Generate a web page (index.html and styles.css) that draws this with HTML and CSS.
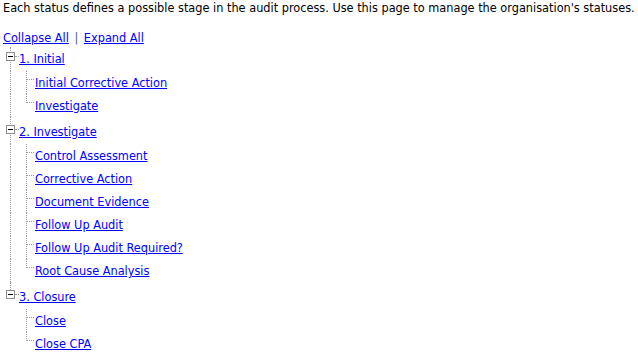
FILE: index.html
```html
<!DOCTYPE html>
<html>
<head>
<meta charset="utf-8">
<link rel="stylesheet" href="styles.css">
</head>
<body>
<p class="intro">Each status defines a possible stage in the audit process. Use this page to manage the organisation's statuses.</p>
<div class="actions"><a href="#">Collapse All</a> <span class="sep">|</span> <a href="#">Expand All</a></div>
<div class="tree">
  <div class="node first">
    <div class="row parent"><span class="tog"><span class="box"></span></span><a href="#">1. Initial</a></div>
    <div class="row child"><span class="indent"></span><span class="elbow"></span><a href="#">Initial Corrective Action</a></div>
    <div class="row child last"><span class="indent"></span><span class="elbow"></span><a href="#">Investigate</a></div>
  </div>
  <div class="node">
    <div class="row parent"><span class="tog"><span class="box"></span></span><a href="#">2. Investigate</a></div>
    <div class="row child"><span class="indent"></span><span class="elbow"></span><a href="#">Control Assessment</a></div>
    <div class="row child"><span class="indent"></span><span class="elbow"></span><a href="#">Corrective Action</a></div>
    <div class="row child"><span class="indent"></span><span class="elbow"></span><a href="#">Document Evidence</a></div>
    <div class="row child"><span class="indent"></span><span class="elbow"></span><a href="#">Follow Up Audit</a></div>
    <div class="row child"><span class="indent"></span><span class="elbow"></span><a href="#">Follow Up Audit Required?</a></div>
    <div class="row child last"><span class="indent"></span><span class="elbow"></span><a href="#">Root Cause Analysis</a></div>
  </div>
  <div class="node lastnode">
    <div class="row parent"><span class="tog"><span class="box"></span></span><a href="#">3. Closure</a></div>
    <div class="row child"><span class="indent"></span><span class="elbow"></span><a href="#">Close</a></div>
    <div class="row child last"><span class="indent"></span><span class="elbow"></span><a href="#">Close CPA</a></div>
  </div>
</div>
</body>
</html>
```
FILE: styles.css
```css
body {
  margin: 0;
  background: #fff;
  color: #000;
  font-family: "DejaVu Sans Condensed", "DejaVu Sans", sans-serif;
  font-stretch: semi-condensed;
  font-size: 12.6px;
}
a {
  color: #0000ff;
  text-decoration: underline;
}
.intro {
  margin: 0;
  padding-left: 3px;
  line-height: 15px;
  white-space: nowrap;
}
.actions {
  margin-top: 16px;
  padding-left: 3px;
  line-height: 13px;
}
.sep {
  color: #4a5a8a;
  margin: 0 2px;
}
.tree {
  padding-left: 2px;
}
.row {
  display: flex;
  line-height: 15px;
  white-space: nowrap;
}
.row a {
  margin-left: 1px;
}
.parent {
  height: 26px;
  padding-top: 1px;
  align-items: stretch;
}
.parent a {
  align-self: center;
}
.child {
  height: 23px;
  align-items: stretch;
}
.child a {
  align-self: center;
}
.tog, .indent, .elbow {
  position: relative;
  width: 16px;
  flex: none;
}
.parent .tog {
  margin-top: -1px;
  height: 27px;
}
.tog::before, .indent::before {
  content: "";
  position: absolute;
  left: 8px;
  top: 0;
  bottom: 0;
  border-left: 1px dotted #9a9a9a;
}
.first .tog::before {
  top: 3px;
}
.lastnode .tog::before {
  bottom: auto;
  height: 10px;
}
.lastnode .indent::before {
  display: none;
}
.tog::after {
  content: "";
  position: absolute;
  left: 13px;
  width: 4px;
  top: 12px;
  border-top: 1px dotted #9a9a9a;
}
.box {
  position: absolute;
  left: 4px;
  top: 8px;
  width: 7px;
  height: 7px;
  border: 1px solid #8c8c8c;
  background: #fff;
  z-index: 1;
}
.box::after {
  content: "";
  position: absolute;
  left: 1px;
  top: 3px;
  width: 5px;
  height: 1px;
  background: #000;
}
.elbow::before {
  content: "";
  position: absolute;
  left: 8px;
  top: 0;
  bottom: 0;
  border-left: 1px dotted #9a9a9a;
}
.last .elbow::before {
  bottom: auto;
  height: 9px;
}
.elbow::after {
  content: "";
  position: absolute;
  left: 9px;
  width: 7px;
  top: 8px;
  border-top: 1px dotted #9a9a9a;
}
```
